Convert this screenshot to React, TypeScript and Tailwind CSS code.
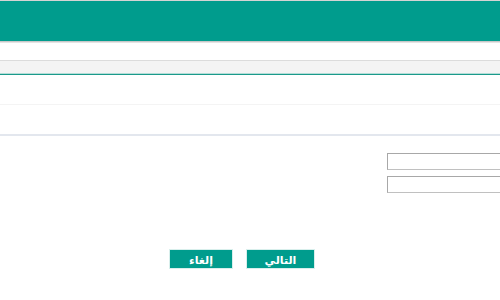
export default function App() {
  return (
    <div className="w-[500px] h-[300px] overflow-hidden bg-white font-['Noto_Sans',_'DejaVu_Sans',sans-serif]">
      {/* top header */}
      <div className="h-[1px] bg-[#d4d4d4]" />
      <div className="h-[40px] bg-[#009c8d]" />
      <div className="h-[1px] bg-[#c8c8c8]" />
      <div className="h-[1px] bg-[#e4e4e4]" />

      <div className="h-[17px]" />

      {/* tab bar */}
      <div className="h-[1px] bg-[#dcdcdc]" />
      <div className="h-[12px] bg-[#f4f4f4]" />
      <div className="h-[1px] bg-[#b5ddd8]" />
      <div className="h-[1px] bg-[#1b9a8b]" />

      {/* rows */}
      <div className="h-[30px] border-b border-[#f4f4f4]" />
      <div className="h-[31px] border-b-2 border-[#e3e7ee]" />

      {/* inputs */}
      <div className="pt-[17px] pl-[387px] flex flex-col gap-[6px]">
        <input
          type="text"
          className="w-[160px] h-[17px] bg-white border border-[#c0c0c0] border-t-[#a8a8a8] border-l-[#a8a8a8] outline-none"
        />
        <input
          type="text"
          className="w-[160px] h-[17px] bg-white border border-[#c0c0c0] border-t-[#a8a8a8] border-l-[#a8a8a8] outline-none"
        />
      </div>

      {/* actions */}
      <div className="pt-[56px] pl-[169px] flex gap-[13px]">
        <button
          dir="rtl"
          className="w-[64px] h-[20px] bg-[#009c8d] text-white text-[11px] font-semibold leading-none border border-[#d8efec] flex items-center justify-center"
        >
          إلغاء
        </button>
        <button
          dir="rtl"
          className="w-[69px] h-[20px] bg-[#009c8d] text-white text-[11px] font-semibold leading-none border border-[#d8efec] flex items-center justify-center"
        >
          التالي
        </button>
      </div>
    </div>
  );
}
